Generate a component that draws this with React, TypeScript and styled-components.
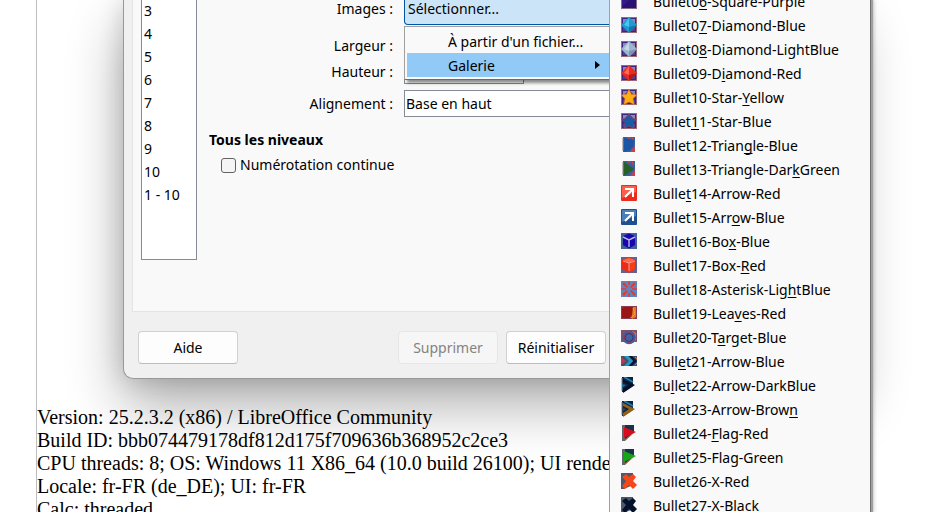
import React from "react";
import styled, { createGlobalStyle, css } from "styled-components";

const GlobalStyle = createGlobalStyle`
  * { box-sizing: border-box; }
  body { margin: 0; background: #fff; overflow: hidden; }
  body, button, select, input { font-family: "Noto Sans", "Open Sans", sans-serif; font-size: 14px; color: #000; }
`;

const Desktop = styled.div`
  position: relative;
  height: 100vh;
  overflow: hidden;
`;

const DocumentPage = styled.main`
  min-height: 100vh;
  margin-left: 36px;
  padding-top: 406px;
  border-left: 1px solid #bdbdbd;
  font: 20px/23px "Liberation Serif", serif;
  white-space: nowrap;
  p { margin: 0; }
`;

const Dialog = styled.section`
  position: absolute;
  top: 0;
  left: 123px;
  right: 76px;
  border: 1px solid #989898;
  border-top: 0;
  border-radius: 0 0 10px 10px;
  background: #f0f0f0;
  box-shadow: 0 26px 56px rgba(0, 0, 0, 0.32), 0 0 24px rgba(0, 0, 0, 0.16);
`;

const TabPage = styled.div`
  display: flex;
  gap: 12px;
  margin-left: 8px;
  padding: 0 8px 51px;
  border: 1px solid #e4e4e4;
  border-top: 0;
  background: #f9f9f9;
`;

const LevelList = styled.select`
  width: 56px;
  height: 260px;
  padding: 1px 0 0;
  border: 1px solid #858a94;
  border-top: 0;
  border-radius: 0;
  background: #fff;
  overflow: hidden;
  outline: 0;
  option { min-height: 23px; padding: 0 2px; line-height: 23px; }
`;

const Form = styled.form`
  flex: 1;
`;

const Row = styled.div<{ $gap?: number; $top?: boolean }>`
  position: relative;
  display: grid;
  grid-template-columns: 184px 1fr;
  column-gap: 11px;
  align-items: ${(p) => (p.$top ? "start" : "center")};
  margin-top: ${(p) => p.$gap ?? 0}px;
`;

const Label = styled.label`
  text-align: right;
  line-height: 18px;
`;

const PickerButton = styled.button`
  height: 25px;
  padding: 0 3px 6px;
  border: 1px solid #0054a6;
  border-top: 0;
  border-radius: 0 0 4px 4px;
  background: #cce4f7;
  line-height: 18px;
  text-align: left;
`;

const SizeInput = styled.input`
  width: 120px;
  height: 24px;
  border: 1px solid #858a94;
  background: #fff;
`;

const AlignSelect = styled.select`
  height: 27px;
  padding: 0 1px;
  border: 1px solid #858a94;
  border-radius: 0;
  background: #fff;
  appearance: none;
`;

const SectionTitle = styled.h2`
  margin: 13px 0 5px;
  font-size: 14px;
  line-height: 20px;
`;

const CheckRow = styled.label`
  display: flex;
  align-items: center;
  gap: 4px;
  padding-left: 12px;
  line-height: 20px;
`;

const CheckBox = styled.input`
  width: 15px;
  height: 15px;
  margin: 0;
  border: 1px solid #626262;
  border-radius: 3px;
  background: #f5f5f5;
  appearance: none;
`;

const Footer = styled.footer`
  display: flex;
  gap: 8px;
  padding: 19px 14px 14px;
`;

const PushButton = styled.button`
  width: 100px;
  height: 33px;
  padding: 0;
  border: 1px solid #d0d0d0;
  border-bottom-color: #bcbcbc;
  border-radius: 4px;
  background: #fdfdfd;
  &:first-child { margin-right: 152px; }
  &:disabled { color: #838383; border-color: #e6e6e6; background: #f6f6f6; }
`;

const menuSurface = css`
  border: 1px solid #a0a0a0;
  background: #f9f9f9;
`;

const PickerMenu = styled.div`
  ${menuSurface}
  position: absolute;
  z-index: 1;
  top: 26px;
  left: 195px;
  width: 210px;
  padding: 2px;
  border-bottom-color: #6c6c6c;
  box-shadow: 3px 3px 3px rgba(0, 0, 0, 0.45);
`;

const MenuItem = styled.button<{ $active?: boolean }>`
  display: flex;
  align-items: center;
  gap: 100px;
  width: 100%;
  height: 24px;
  padding: 0 0 0 41px;
  border: 0;
  background: ${(p) => (p.$active ? "#91c9f7" : "transparent")};
  white-space: nowrap;
`;

const GalleryMenu = styled.div`
  ${menuSurface}
  position: absolute;
  z-index: 2;
  top: 0;
  left: 609px;
  width: 262px;
  height: 100vh;
  border-width: 0 1px;
  border-right-color: #6c6c6c;
  box-shadow: 2px 0 1px #a0a0a0, 4px 0 3px rgba(0, 0, 0, 0.12);
  overflow: hidden;
`;

const GalleryList = styled.div`
  margin-top: -11px;
`;

const GalleryItem = styled.button`
  display: flex;
  align-items: center;
  gap: 16px;
  width: 100%;
  height: 24px;
  padding: 0 11px;
  border: 0;
  background: transparent;
  white-space: nowrap;
  svg { flex: none; }
`;

const Mnemonic = styled.u`
  text-underline-offset: 2px;
  text-decoration-thickness: 1px;
  text-decoration-skip-ink: none;
`;

const Square = () => (
  <>
    <rect width="16" height="16" fill="#8b6b86" />
    <rect x="1" y="0" width="14" height="15" fill="#35198a" />
    <path d="M1 14L15 0V15H1Z" fill="#2a1273" />
  </>
);

const Backing = () => (
  <>
    <rect width="16" height="16" fill="#9a6a78" />
    <rect x="1" y="1" width="14" height="14" fill="#3c2585" />
    <path d="M2 2H7L2 7ZM14 2V7L9 2Z" fill="#8e86b4" />
    <path d="M2 14V10L6 14ZM14 14V10L10 14Z" fill="#5a3f91" />
  </>
);

const Diamond = ({ light, mid, dark }: { light: string; mid: string; dark: string }) => (
  <>
    <Backing />
    <path d="M8 0L16 8L8 16L0 8Z" fill={mid} />
    <path d="M8 1L3 8L8 10Z" fill={light} />
    <path d="M8 10L16 8L8 16Z" fill={dark} />
  </>
);

const Star = ({ fill, edge }: { fill: string; edge: string }) => (
  <>
    <Backing />
    <path
      d="M8 0.5L10.4 5.2L15.6 6L12 9.8L13.2 15.4L8 13L2.8 15.4L4 9.8L0.4 6L5.6 5.2Z"
      fill={fill}
      stroke={edge}
      strokeWidth="0.6"
    />
  </>
);

const Triangle = ({ fill, wide }: { fill: string; wide?: boolean }) => (
  <>
    <rect x="2" y="0" width="12" height="15" fill="#3a5d9c" />
    <path d="M6 0L8 3L10 0ZM10 2L12 0L13 5ZM11 12L14 9V15H9Z" fill="#c8404c" />
    <path d="M2 1V14" stroke="#8f7884" />
    <path d={wide ? "M3 1L13 3L12 10L9 13L3 15Z" : "M3 1L13 8L3 15Z"} fill={fill} />
  </>
);

const ArrowTile = ({ top, bottom }: { top: string; bottom: string }) => (
  <>
    <rect width="16" height="16" rx="1" fill={bottom} />
    <path d="M1 1H15V7L1 13Z" fill={top} />
    <path d="M4 4H12V12M12 4L4 12" fill="none" stroke="#fff" strokeWidth="2" />
  </>
);

const BoxBlue = () => (
  <>
    <rect width="16" height="16" fill="#416294" />
    <path d="M2 3L8 0.5L14 3V12L8 15.5L2 12Z" fill="#1b05ad" />
    <path d="M2 4L8 7L14 4M8 7V14" fill="none" stroke="#b6b5ec" strokeWidth="1.4" />
  </>
);

const BoxRed = () => (
  <>
    <rect width="16" height="16" fill="#626296" />
    <path d="M1 3L8 0L15 3V12L8 16L1 12Z" fill="#e92d18" />
    <path d="M2 3L8 1L14 3L8 6Z" fill="#ff6a4d" />
    <path d="M8 7L14 4V12L8 15Z" fill="#f2401f" />
    <path d="M2 4L8 6L14 4M8 6V14" fill="none" stroke="#ff9d86" />
  </>
);

const Asterisk = () => (
  <>
    <rect width="16" height="16" fill="#5f86c2" />
    <path d="M1 3L3 1L7 6L6 7ZM15 3L13 1L9 6L10 7ZM1 13L3 15L7 10L6 9ZM15 13L13 15L9 10L10 9Z" fill="#e63a2c" />
    <path d="M0 7H5V9H0ZM11 7H16V9H11ZM7 0H9V4H7ZM7 12H9V16H7Z" fill="#c9485a" />
  </>
);

const Leaves = () => (
  <>
    <rect y="1" width="16" height="13" fill="#8d3b51" />
    <path d="M10 2H15V12L11 14Z" fill="#e87822" />
    <path d="M1 3L4 2H12L11 10L8 13H1Z" fill="#9c1515" />
    <path d="M12 3L14 9L10 13" fill="none" stroke="#f39a3e" />
  </>
);

const Target = () => (
  <>
    <rect y="1" width="16" height="12" fill="#83506b" />
    <path d="M11 2L15 4V11L12 14Z" fill="#e07a2c" />
    <circle cx="8" cy="8.5" r="6" fill="#a83a4a" stroke="#425d9b" strokeWidth="1.6" />
    <circle cx="8" cy="8.5" r="4" fill="#4561a6" stroke="#243f83" />
  </>
);

const Chevron = () => (
  <>
    <rect y="3" width="16" height="10" fill="#46506c" />
    <path d="M0 4L5 8L0 12Z" fill="#b93c50" />
    <path d="M8 3H11L16 8L11 13H8L12 8Z" fill="#071536" />
    <path d="M3 3H7L12 8L7 13H3L8 8Z" fill="#1f9bc5" />
    <path d="M14 4L16 6M14 12L16 10" stroke="#d87635" />
  </>
);

const DartArrow = ({ fill, accent }: { fill: string; accent: string }) => (
  <>
    <path d="M1 0H12V9L3 15H1Z" fill="#0c2348" />
    <path d="M3 0L12 5M2 3L6 5" stroke="#1b87ae" strokeWidth="1.6" />
    <path d="M1 1V14" stroke="#777989" />
    <path d="M2 2L14 8L2 16V12L8 8L2 5Z" fill={fill} />
    <path d="M1 7L5 8L1 11Z" fill={accent} />
  </>
);

const Flag = ({ fill }: { fill: string }) => (
  <>
    <path d="M1 0H13V7L5 14H1Z" fill="#16324c" />
    <path d="M1 0H4V16H1Z" fill="#62656e" />
    <path d="M4 14L14 7L4 16Z" fill="#a65e22" />
    <path d="M3 2L15 7L3 13Z" fill={fill} />
  </>
);

const Cross = ({ fill }: { fill: string }) => (
  <>
    <path d="M0 0H12V12L3 16H0Z" fill="#4c586b" />
    <path d="M1 4L5 1L8 4L12 1L15 4L12 8L16 12L12 16L8 12L4 16L1 13L5 8Z" fill={fill} />
  </>
);

const gallery: { name: string; key?: number; icon: React.ReactNode }[] = [
  { name: "Bullet06-Square-Purple", key: 7, icon: <Square /> },
  { name: "Bullet07-Diamond-Blue", key: 7, icon: <Diamond light="#49c5ee" mid="#1d9bd3" dark="#1277aa" /> },
  { name: "Bullet08-Diamond-LightBlue", key: 7, icon: <Diamond light="#c6d8e8" mid="#9db7d0" dark="#7895b3" /> },
  { name: "Bullet09-Diamond-Red", key: 10, icon: <Diamond light="#ff6854" mid="#ec2a20" dark="#bd1712" /> },
  { name: "Bullet10-Star-Yellow", key: 14, icon: <Star fill="#ffae12" edge="#f47b14" /> },
  { name: "Bullet11-Star-Blue", key: 6, icon: <Star fill="#155ca5" edge="#a34668" /> },
  { name: "Bullet12-Triangle-Blue", key: 14, icon: <Triangle fill="#1d55a5" wide /> },
  { name: "Bullet13-Triangle-DarkGreen", key: 21, icon: <Triangle fill="#286029" /> },
  { name: "Bullet14-Arrow-Red", key: 5, icon: <ArrowTile top="#fa604b" bottom="#e92c1d" /> },
  { name: "Bullet15-Arrow-Blue", key: 12, icon: <ArrowTile top="#4b7fb8" bottom="#1f5190" /> },
  { name: "Bullet16-Box-Blue", key: 11, icon: <BoxBlue /> },
  { name: "Bullet17-Box-Red", key: 13, icon: <BoxRed /> },
  { name: "Bullet18-Asterisk-LightBlue", key: 21, icon: <Asterisk /> },
  { name: "Bullet19-Leaves-Red", key: 12, icon: <Leaves /> },
  { name: "Bullet20-Target-Blue", key: 10, icon: <Target /> },
  { name: "Bullet21-Arrow-Blue", key: 4, icon: <Chevron /> },
  { name: "Bullet22-Arrow-DarkBlue", key: 2, icon: <DartArrow fill="#03102c" accent="#17729c" /> },
  { name: "Bullet23-Arrow-Brown", key: 19, icon: <DartArrow fill="#946116" accent="#3d4450" /> },
  { name: "Bullet24-Flag-Red", key: 9, icon: <Flag fill="#d80d20" /> },
  { name: "Bullet25-Flag-Green", icon: <Flag fill="#16a516" /> },
  { name: "Bullet26-X-Red", icon: <Cross fill="#f74719" /> },
  { name: "Bullet27-X-Black", icon: <Cross fill="#05102b" /> },
];

const levels = ["3", "4", "5", "6", "7", "8", "9", "10", "1 - 10"];

const ItemName = ({ name, at }: { name: string; at?: number }) =>
  at === undefined ? (
    <span>{name}</span>
  ) : (
    <span>
      {name.slice(0, at)}
      <Mnemonic>{name[at]}</Mnemonic>
      {name.slice(at + 1)}
    </span>
  );

export default function App() {
  return (
    <Desktop>
      <GlobalStyle />
      <DocumentPage>
        <p>Version: 25.2.3.2 (x86) / LibreOffice Community</p>
        <p>Build ID: bbb074479178df812d175f709636b368952c2ce3</p>
        <p>CPU threads: 8; OS: Windows 11 X86_64 (10.0 build 26100); UI render:</p>
        <p>Locale: fr-FR (de_DE); UI: fr-FR</p>
        <p>Calc: threaded</p>
      </DocumentPage>

      <Dialog role="dialog">
        <TabPage>
          <LevelList multiple size={11} aria-label="Niveau">
            {levels.map((level) => (
              <option key={level}>{level}</option>
            ))}
          </LevelList>
          <Form>
            <Row $top>
              <Label htmlFor="images">Images :</Label>
              <PickerButton id="images" type="button" aria-haspopup="menu">Sélectionner...</PickerButton>
              <PickerMenu role="menu">
                <MenuItem type="button" role="menuitem">À partir d'un fichier...</MenuItem>
                <MenuItem type="button" role="menuitem" $active>
                  Galerie
                  <svg width="5" height="8" viewBox="0 0 5 8"><path d="M0 0L5 4L0 8Z" /></svg>
                </MenuItem>
              </PickerMenu>
            </Row>
            <Row $gap={9}>
              <Label htmlFor="width">Largeur :</Label>
              <SizeInput id="width" />
            </Row>
            <Row $gap={2}>
              <Label htmlFor="height">Hauteur :</Label>
              <SizeInput id="height" />
            </Row>
            <Row $gap={6}>
              <Label htmlFor="align">Alignement :</Label>
              <AlignSelect id="align">
                <option>Base en haut</option>
              </AlignSelect>
            </Row>
            <SectionTitle>Tous les niveaux</SectionTitle>
            <CheckRow>
              <CheckBox type="checkbox" />
              Numérotation continue
            </CheckRow>
          </Form>
        </TabPage>
        <Footer>
          <PushButton type="button">Aide</PushButton>
          <PushButton type="button" disabled>Supprimer</PushButton>
          <PushButton type="button">Réinitialiser</PushButton>
        </Footer>
      </Dialog>

      <GalleryMenu role="menu">
        <GalleryList>
          {gallery.map((item) => (
            <GalleryItem key={item.name} type="button" role="menuitem">
              <svg width="16" height="16" viewBox="0 0 16 16" aria-hidden="true">{item.icon}</svg>
              <ItemName name={item.name} at={item.key} />
            </GalleryItem>
          ))}
        </GalleryList>
      </GalleryMenu>
    </Desktop>
  );
}
